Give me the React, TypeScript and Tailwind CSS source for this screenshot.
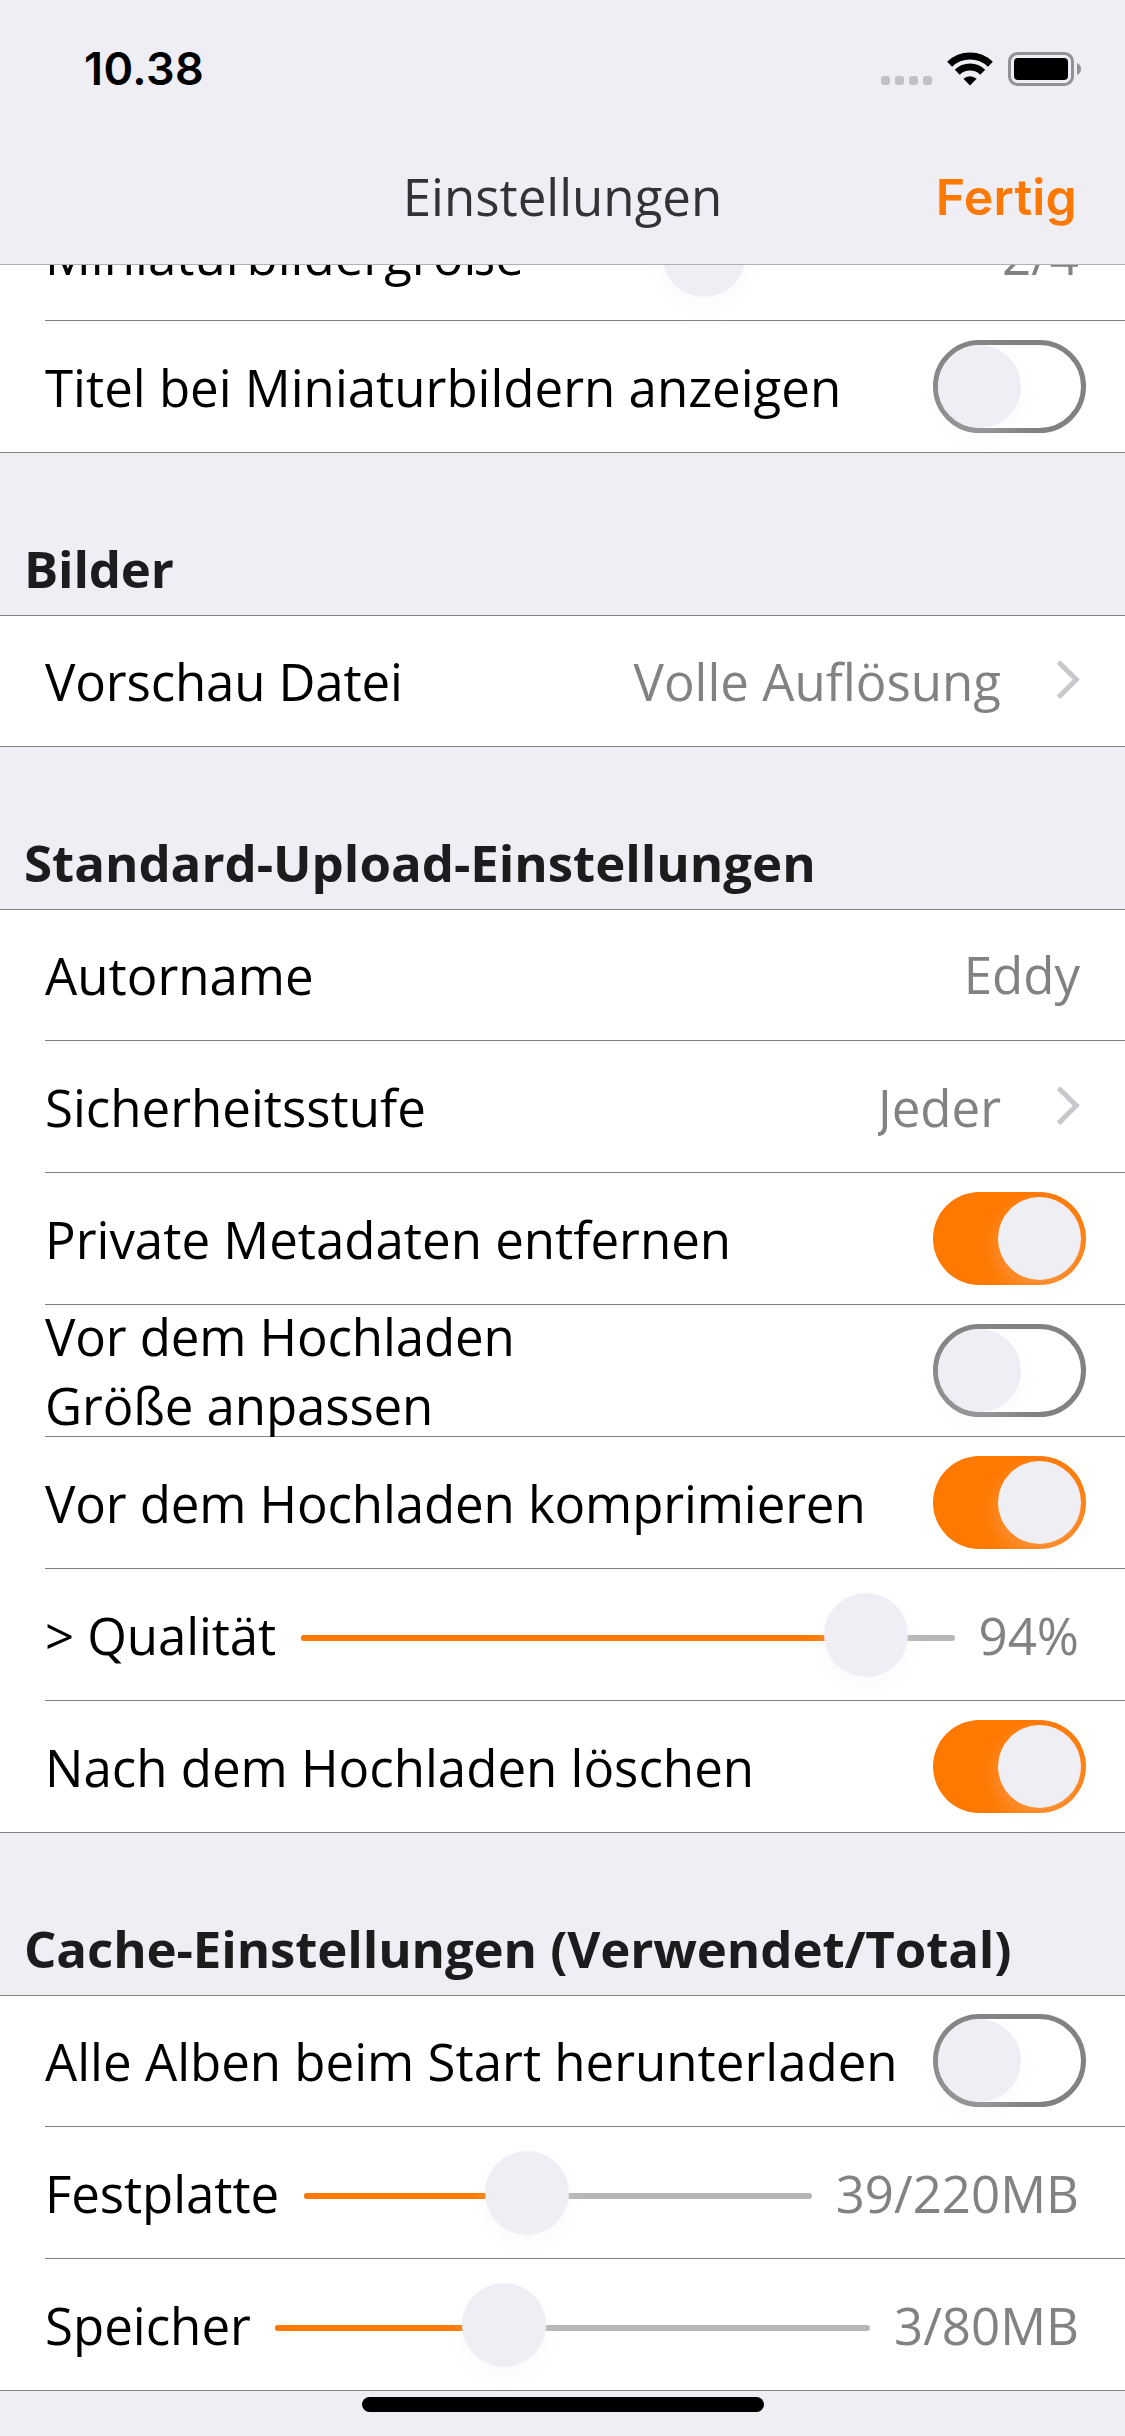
import type { ReactNode } from "react";

const SHADOW = "shadow-[0_9px_22px_rgba(239,238,244,0.28)]";

function StatusBar() {
  return (
    <div className="flex h-[132px] items-start justify-between pl-[84px] pr-[44px]">
      <span className="pt-[42px] font-['Inter'] text-[45px] leading-[54px] font-semibold tracking-[0.4px] text-black">
        10.38
      </span>
      <div className="flex pt-[52px]">
        <div className="mt-[24px] flex gap-[5px]">
          {[0, 1, 2, 3].map((i) => (
            <span key={i} className="size-[9px] rounded-[3px] bg-[#c1c1c4]" />
          ))}
        </div>
        <svg className="ml-[15px] h-[34px] w-[46px]" viewBox="0 0 46 34" fill="none" aria-hidden="true">
          <path d="M2.6 12.2a29.4 29.4 0 0 1 40.8 0" stroke="#000" strokeWidth="7" />
          <path d="M10.3 20.2a18.2 18.2 0 0 1 25.4 0" stroke="#000" strokeWidth="7" />
          <path d="M23 33.4 16.4 26.8a9.6 9.6 0 0 1 13.2 0Z" fill="#000" />
        </svg>
        <svg className="ml-[15px] h-[34px] w-[73px]" viewBox="0 0 73 34" fill="none" aria-hidden="true">
          <rect x="1.5" y="1.5" width="63" height="31" rx="8" stroke="#929295" strokeWidth="3" />
          <rect x="6" y="6" width="54" height="22" rx="4" fill="#000" />
          <path d="M69 11c2.500 1 4 3.300 4 6s-1.500 5-4 6Z" fill="#929295" />
        </svg>
      </div>
    </div>
  );
}

function NavBar() {
  return (
    <div className="grid h-[132px] grid-cols-[1fr_auto_1fr] items-start px-[48px] pt-[28px]">
      <span />
      <h1 className="pt-[2px] text-[51px] leading-[69px] text-[#333335]">Einstellungen</h1>
      <button className="justify-self-end pt-[7px] font-['Inter'] text-[50px] leading-[61px] font-semibold tracking-[0.2px] text-[#ff7800]">
        Fertig
      </button>
    </div>
  );
}

function Toggle({ on = false }: { on?: boolean }) {
  return (
    <span
      className={
        on
          ? "flex h-[93px] w-[153px] shrink-0 items-center justify-end rounded-full bg-[#ff7800] pr-[5px]"
          : "flex h-[93px] w-[153px] shrink-0 items-center rounded-full border-[5px] border-[#828282] bg-white"
      }
    >
      <span className={`size-[83px] rounded-full bg-[#efeef4] ${SHADOW}`} />
    </span>
  );
}

function Slider({ left, right, knob }: { left: number; right: number; knob: number }) {
  return (
    <span
      className="relative mt-[7px] block h-[6px] shrink-0 rounded-full bg-[#b6b6b6]"
      style={{ width: right - left }}
    >
      <span className="block h-full rounded-full bg-[#ff7800]" style={{ width: knob - left }} />
      <span
        className={`absolute -top-[42px] size-[84px] rounded-full bg-[#efeef4] ${SHADOW}`}
        style={{ left: knob - left - 42 }}
      />
    </span>
  );
}

function Value({ children }: { children: ReactNode }) {
  return <span className="overflow-x-clip pt-px text-[#828282]">{children}</span>;
}

function Chevron() {
  return (
    <svg
      className="-mt-px mr-[5px] ml-[55px] h-[40px] w-[25px]"
      viewBox="0 0 25 40"
      fill="none"
      aria-hidden="true"
    >
      <path d="M2.500 2 20.300 19.600 2.500 37.300" stroke="#c7c7cc" strokeWidth="5" />
    </svg>
  );
}

function Row({
  label,
  children,
  tracking = "",
  first = false,
  last = false,
}: {
  label: ReactNode;
  children: ReactNode;
  tracking?: string;
  first?: boolean;
  last?: boolean;
}) {
  return (
    <div className={last ? "border-b border-[#828282] pl-[45px]" : "pl-[45px]"}>
      <div
        className={`flex items-center justify-between pr-[39px] ${first ? "h-[130px] pb-px" : "h-[131px]"}`}
      >
        <span className={`relative z-10 pt-px whitespace-nowrap text-black ${tracking}`}>{label}</span>
        <span className="flex items-center">{children}</span>
      </div>
      {!last && <div className="h-px bg-[#828282]" />}
    </div>
  );
}

function Group({
  title,
  tracking = "",
  children,
}: {
  title: string;
  tracking?: string;
  children: ReactNode;
}) {
  return (
    <section>
      <h2
        className={`flex h-[162px] items-end pb-[12px] pl-[24px] font-bold text-[#1c1c1e] ${tracking}`}
      >
        {title}
      </h2>
      <div className="border-t border-[#828282] bg-white">{children}</div>
    </section>
  );
}

export default function App() {
  return (
    <div className="flex h-[2436px] w-[1125px] flex-col overflow-hidden bg-[#efeef4] font-['Open_Sans','Noto_Sans',sans-serif] text-[51px] leading-[69px]">
      <header className="z-20 shrink-0 border-b border-[#b2b2b5] bg-[#efeef4]">
        <StatusBar />
        <NavBar />
      </header>
      <main className="-mt-[76px] shrink-0">
        <div className="bg-white">
          <Row label="Miniaturbildergröße">
            <Slider left={545} right={978} knob={704} />
            <span className="w-[24px]" />
            <Value>2/4</Value>
            <span className="w-[7px]" />
          </Row>
          <Row label="Titel bei Miniaturbildern anzeigen" last>
            <Toggle />
          </Row>
        </div>
        <Group title="Bilder" tracking="tracking-[-0.2px]">
          <Row label="Vorschau Datei" tracking="tracking-[-0.15px]" first last>
            <Value>Volle Auflösung</Value>
            <Chevron />
          </Row>
        </Group>
        <Group title="Standard-Upload-Einstellungen" tracking="tracking-[-0.04px]">
          <Row label="Autorname" first>
            <span className="-mt-[2px] flex">
              <Value>Eddy</Value>
            </span>
            <span className="w-[6px]" />
          </Row>
          <Row label="Sicherheitsstufe">
            <Value>Jeder</Value>
            <Chevron />
          </Row>
          <Row label="Private Metadaten entfernen">
            <Toggle on />
          </Row>
          <Row
            tracking="tracking-[-0.12px]"
            label={
              <>
                Vor dem Hochladen
                <br />
                Größe anpassen
              </>
            }
          >
            <Toggle />
          </Row>
          <Row label="Vor dem Hochladen komprimieren" tracking="tracking-[-0.12px]">
            <Toggle on />
          </Row>
          <Row label="> Qualität" tracking="tracking-[-0.1px]">
            <Slider left={301} right={955} knob={866} />
            <span className="w-[24px]" />
            <Value>94%</Value>
            <span className="w-[7px]" />
          </Row>
          <Row label="Nach dem Hochladen löschen" last>
            <Toggle on />
          </Row>
        </Group>
        <Group title="Cache-Einstellungen (Verwendet/Total)" tracking="tracking-[-0.13px]">
          <Row label="Alle Alben beim Start herunterladen" first>
            <Toggle />
          </Row>
          <Row label="Festplatte" tracking="tracking-[-0.08px]">
            <Slider left={304} right={812} knob={527} />
            <span className="w-[24px]" />
            <Value>39/220MB</Value>
            <span className="w-[7px]" />
          </Row>
          <Row label="Speicher" last>
            <Slider left={275} right={870} knob={504} />
            <span className="w-[24px]" />
            <Value>3/80MB</Value>
            <span className="w-[7px]" />
          </Row>
        </Group>
      </main>
      <div className="mt-[6px] h-[15px] w-[402px] shrink-0 self-center rounded-full bg-black" />
    </div>
  );
}
